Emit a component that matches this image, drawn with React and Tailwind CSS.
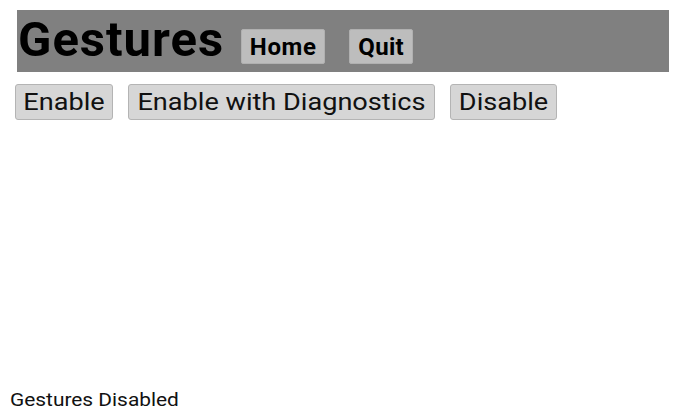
import React, { useState } from 'react';

// the reference glyphs are drawn a bit wider than Roboto, so stretch them
const rowBtn =
    'h-9 rounded-[3px] border border-[#b4b4b4] bg-[#d6d6d6] text-[24px] leading-none text-[#111] flex items-center justify-center';
const stretch = 'inline-block scale-x-[1.13]';

const App = () => {
    const [status, setStatus] = useState('Gestures Disabled');

    return (
        <div className="h-screen flex flex-col bg-white font-['Roboto',sans-serif] text-black">
            <div className="mt-[10px] ml-[17px] w-[652px] h-[62px] bg-[#808080] flex items-center">
                <h1 className="ml-px text-[49px] font-bold leading-none tracking-[1px] -mt-[3px]">Gestures</h1>
                <button className="ml-[17px] mt-[11px] h-[35px] w-[84px] rounded-[2px] border border-[#b0b0b0] bg-[#bdbdbd] text-[24px] font-bold leading-none tracking-[0.6px]">
                    Home
                </button>
                <button className="ml-[24px] mt-[11px] h-[35px] w-[64px] rounded-[2px] border border-[#b0b0b0] bg-[#bdbdbd] text-[24px] font-bold leading-none tracking-[0.3px]">
                    Quit
                </button>
            </div>

            <div className="mt-[12px] ml-[15px] flex gap-[15px]">
                <button className={rowBtn + ' w-[98px]'} onClick={() => setStatus('Gestures Enabled')}>
                    <span className={stretch}>Enable</span>
                </button>
                <button className={rowBtn + ' w-[307px]'} onClick={() => setStatus('Gestures Enabled with Diagnostics')}>
                    <span className={stretch}>Enable with Diagnostics</span>
                </button>
                <button className={rowBtn + ' w-[107px]'} onClick={() => setStatus('Gestures Disabled')}>
                    <span className={stretch}>Disable</span>
                </button>
            </div>

            <div className="mt-auto mb-[2px] ml-[10px] text-[18px] leading-[21px] text-[#111]">
                <span className="inline-block origin-left scale-x-[1.16]">{status}</span>
            </div>
        </div>
    );
};

export default App;
